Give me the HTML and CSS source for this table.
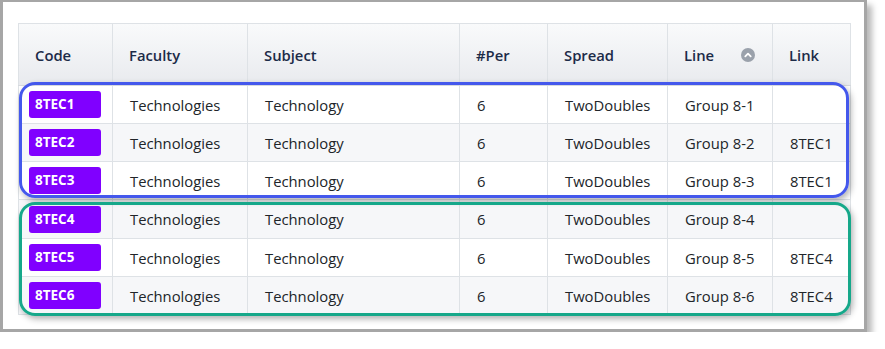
FILE: index.html
```html
<!DOCTYPE html>
<html>
<head>
<meta charset="utf-8">
<link rel="stylesheet" href="styles.css">
</head>
<body>
<div class="frame">
  <table class="grid">
    <colgroup>
      <col class="c-code"><col class="c-fac"><col class="c-sub"><col class="c-per"><col class="c-spr"><col class="c-line"><col class="c-link">
    </colgroup>
    <thead>
      <tr>
        <th>Code</th><th>Faculty</th><th>Subject</th><th>#Per</th><th>Spread</th>
        <th><div class="sorthead"><span>Line</span><svg class="sort" width="14" height="14" viewBox="0 0 14 14"><circle cx="7" cy="7" r="7" fill="#9aa1ab"/><path d="M4.3 8.3 L7 5.6 L9.7 8.3" fill="none" stroke="#fff" stroke-width="1.8" stroke-linecap="round" stroke-linejoin="round"/></svg></div></th>
        <th>Link</th>
      </tr>
    </thead>
    <tbody>
      <tr><td class="code"><span class="badge">8TEC1</span></td><td>Technologies</td><td>Technology</td><td>6</td><td>TwoDoubles</td><td>Group 8-1</td><td></td></tr>
      <tr><td class="code"><span class="badge">8TEC2</span></td><td>Technologies</td><td>Technology</td><td>6</td><td>TwoDoubles</td><td>Group 8-2</td><td>8TEC1</td></tr>
      <tr><td class="code"><span class="badge">8TEC3</span></td><td>Technologies</td><td>Technology</td><td>6</td><td>TwoDoubles</td><td>Group 8-3</td><td>8TEC1</td></tr>
      <tr class="tall"><td class="code"><span class="badge">8TEC4</span></td><td>Technologies</td><td>Technology</td><td>6</td><td>TwoDoubles</td><td>Group 8-4</td><td></td></tr>
      <tr><td class="code"><span class="badge">8TEC5</span></td><td>Technologies</td><td>Technology</td><td>6</td><td>TwoDoubles</td><td>Group 8-5</td><td>8TEC4</td></tr>
      <tr><td class="code"><span class="badge">8TEC6</span></td><td>Technologies</td><td>Technology</td><td>6</td><td>TwoDoubles</td><td>Group 8-6</td><td>8TEC4</td></tr>
    </tbody>
  </table>
  <div class="hl hl-blue"></div>
  <div class="hl hl-green"></div>
</div>
</body>
</html>
```
FILE: styles.css
```css
html, body {
  margin: 0;
  padding: 0;
  background: #ffffff;
}
body {
  font-family: "Open Sans", "Noto Sans", sans-serif;
  color: #212529;
}
.frame {
  position: relative;
  width: 867px;
  height: 332px;
  box-sizing: border-box;
  border-style: solid;
  border-color: #a6a6a6;
  border-width: 2px 3px 3px 3px;
  background: #fff;
  padding: 21px 14px 15px 15px;
  box-shadow: 5px 5px 6px rgba(0,0,0,0.28);
}
.grid {
  width: 832px;
  border-collapse: collapse;
  table-layout: fixed;
  font-size: 14.8px;
  border: 1px solid #dee2e6;
}
.c-code { width: 94px; }
.c-fac { width: 135px; }
.c-sub { width: 212px; }
.c-per { width: 88px; }
.c-spr { width: 120px; }
.c-line { width: 105px; }
.c-link { width: 78px; }
.grid thead tr {
  height: 62px;
  background: linear-gradient(#f9fafb, #e8eaee);
}
.grid th {
  text-align: left;
  font-weight: 600;
  font-size: 14.8px;
  color: #1c2b48;
  padding: 0 16px;
  border: 1px solid #dee2e6;
  border-bottom: 1px solid #d6d9de;
}
.sorthead {
  display: flex;
  align-items: center;
  justify-content: space-between;
}
.sort { display: block; margin-right: 1px; }
.grid tbody tr { height: 38px; }
.grid tbody tr.tall { height: 39px; }
.grid tbody tr:nth-child(even) { background: #f6f7f9; }
.grid td {
  padding: 0 17px;
  border: 1px solid #dee2e6;
  white-space: nowrap;
}
.grid td.code { padding: 0 10px; }
.badge {
  display: block;
  box-sizing: border-box;
  width: 72px;
  height: 27px;
  line-height: 27px;
  background: #8000ff;
  color: #fff;
  font-weight: 700;
  font-size: 13.5px;
  padding-left: 6px;
  border-radius: 3px;
}
.hl {
  position: absolute;
  box-sizing: border-box;
  border: 3px solid;
  border-radius: 16px;
  box-shadow: 2px 3px 6px rgba(0,0,0,0.3);
  pointer-events: none;
}
.hl-blue {
  left: 16px;
  top: 80px;
  width: 830px;
  height: 116px;
  border-color: #4458ec;
}
.hl-green {
  left: 16px;
  top: 200px;
  width: 832px;
  height: 114px;
  border-color: #16a88a;
}
```
